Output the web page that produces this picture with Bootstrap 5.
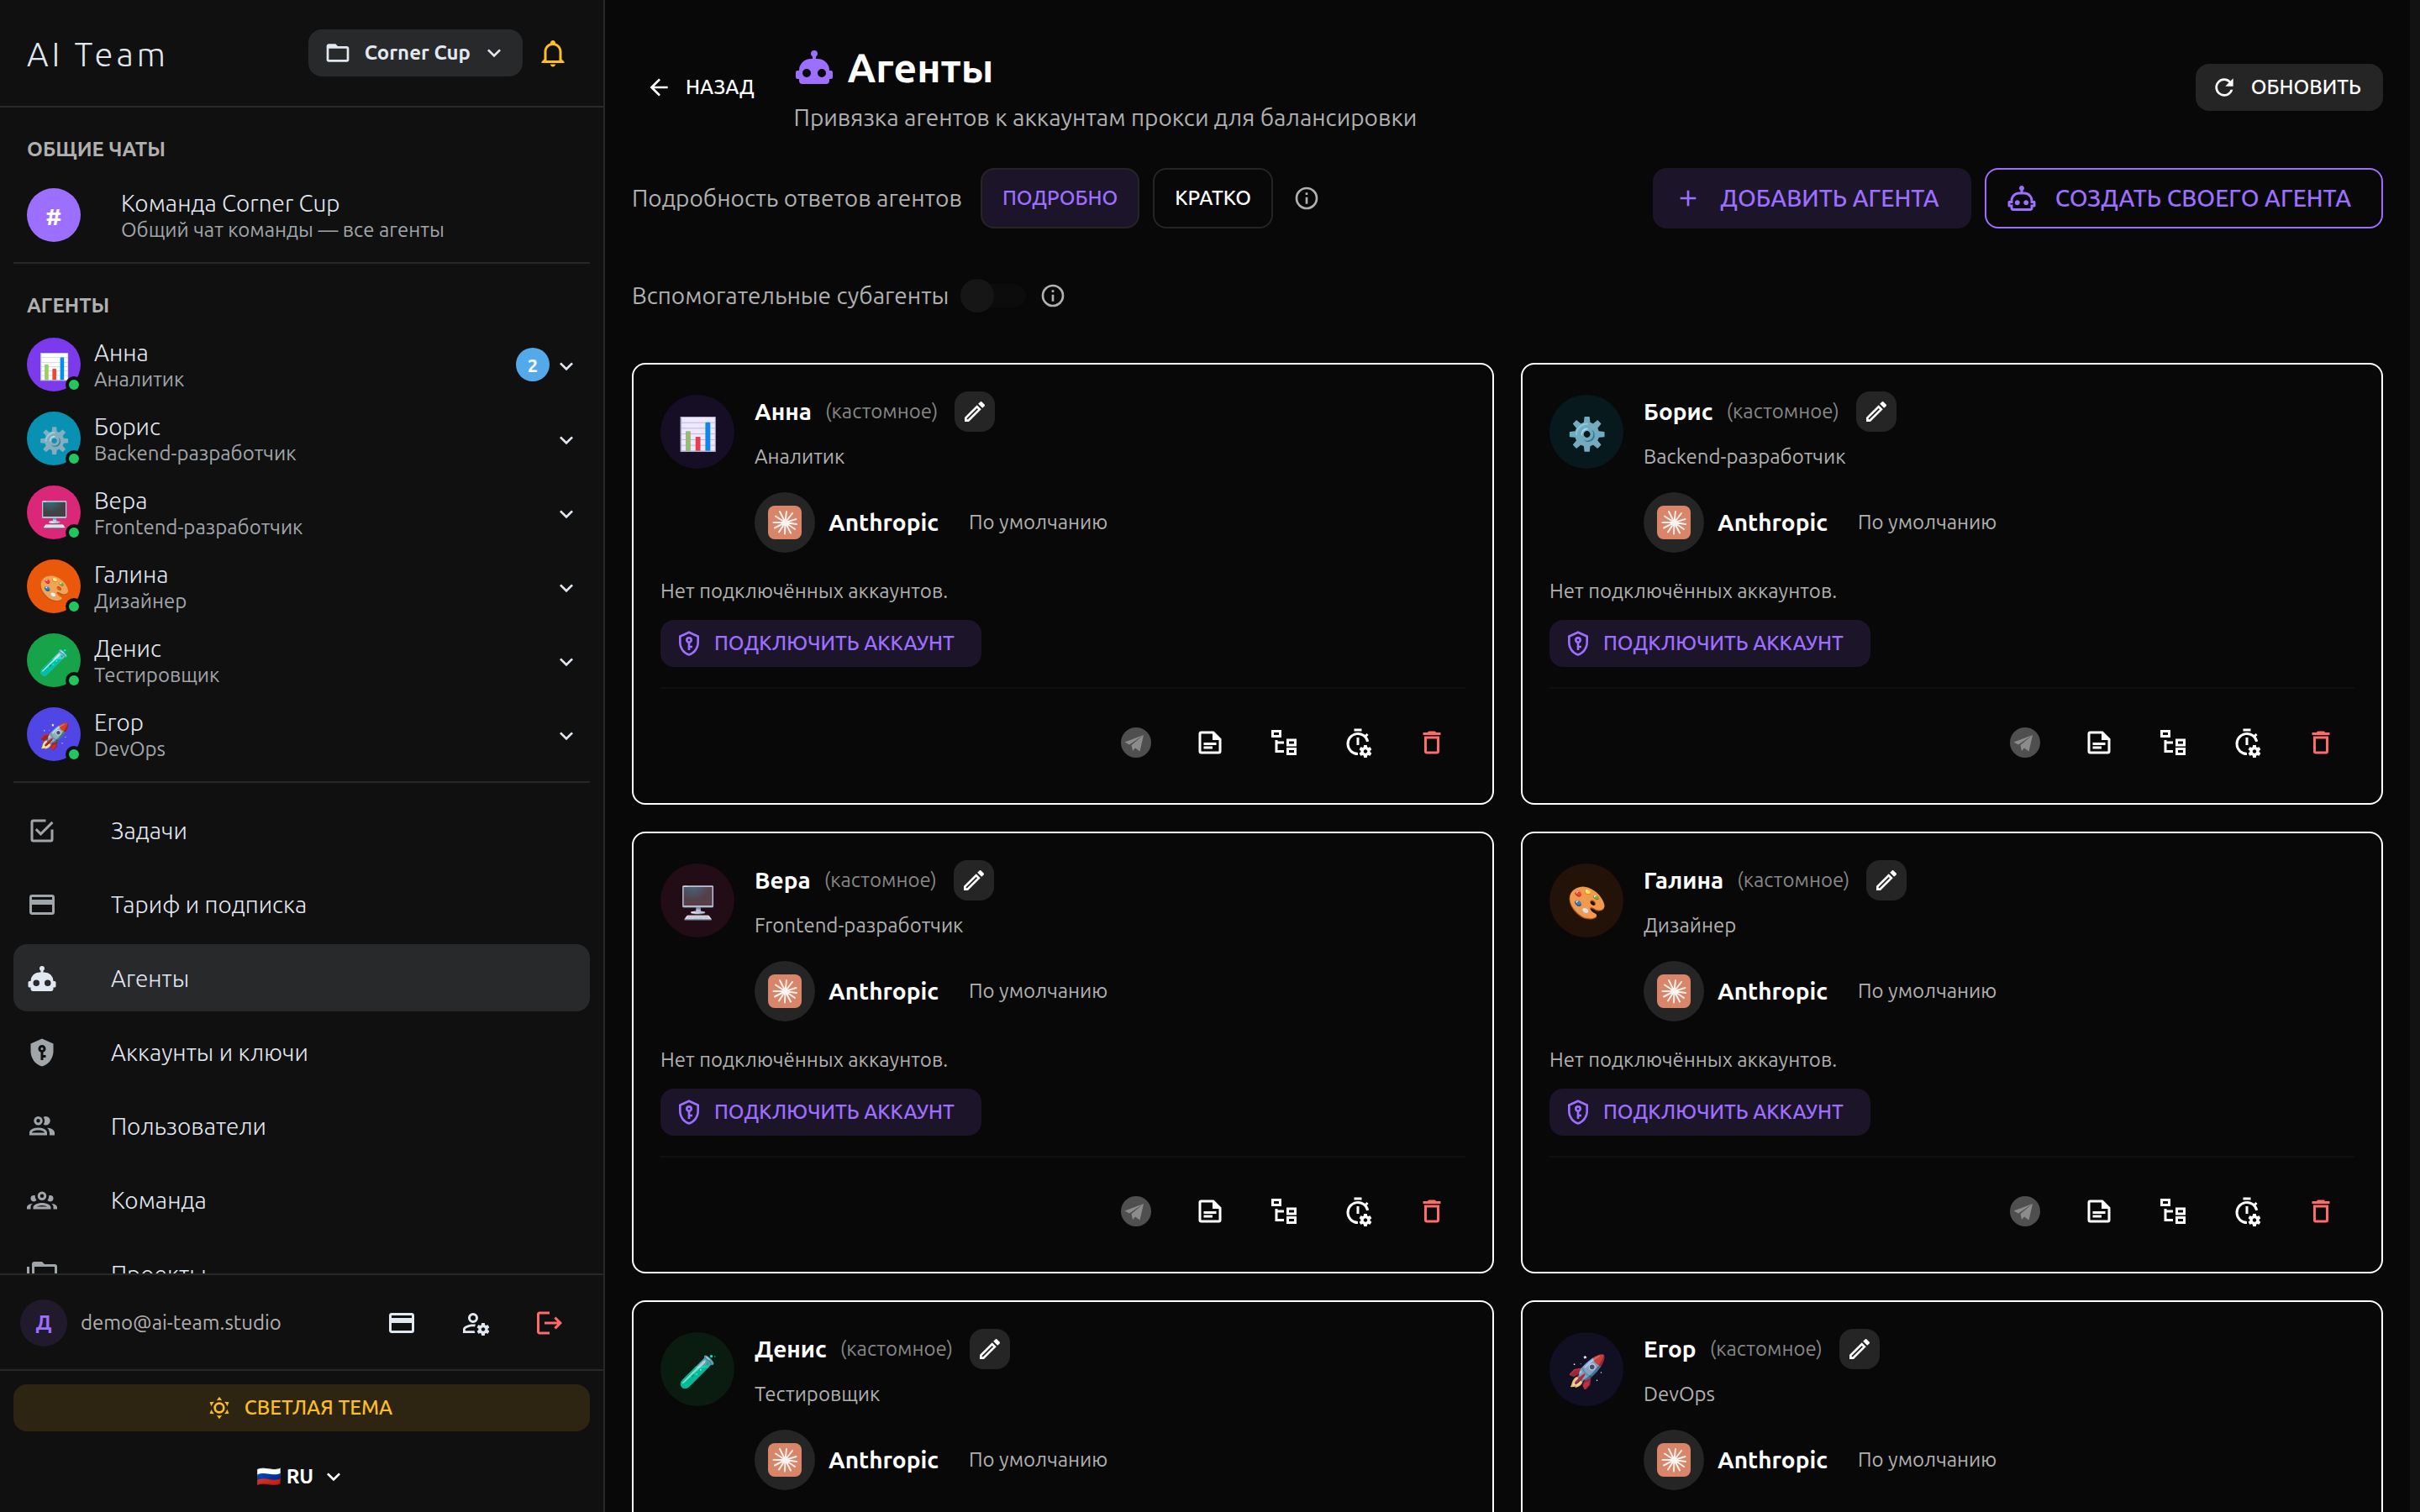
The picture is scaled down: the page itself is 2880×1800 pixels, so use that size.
<!DOCTYPE html>
<html lang="ru" data-bs-theme="dark">
<head>
<meta charset="utf-8">
<meta name="viewport" content="width=device-width, initial-scale=1">
<title>AI Team — Агенты</title>
<link href="https://cdn.jsdelivr.net/npm/bootstrap@5.3.0/dist/css/bootstrap.min.css" rel="stylesheet">
<style>
  :root { --accent: #9d6fff; --muted: #b0b0b0; --line: #272727; --soft: #252525; --text: #e2e8f0; }
  body { background: #080808; color: #fff; font-family: Ubuntu, "Noto Sans", sans-serif; font-size: 24px; line-height: 32px; }
  a { color: inherit; text-decoration: none; }
  .ic { width: 32px; height: 32px; fill: currentColor; flex: none; display: block; }
  .ic-md { width: 36px; height: 36px; }
  .ic-lg { width: 48px; height: 48px; }
  .btn { --bs-btn-font-size: 24px; --bs-btn-line-height: 32px; --bs-btn-font-weight: 500; --bs-btn-border-width: 2px; --bs-btn-border-radius: 16px; --bs-btn-padding-y: 10px; --bs-btn-color: #fff;
    display: inline-flex; align-items: center; white-space: nowrap; font-family: inherit; }
  .fs-name { font-size: 28px; }
  .fw-strong { font-weight: 600; }
  .text-soft { color: var(--muted); }
  .text-accent { color: var(--accent); }
  .btn-soft { --bs-btn-bg: var(--soft); padding-left: 16px; padding-right: 24px; }
  .btn-tall { height: 72px; }
  .btn-accent { --bs-btn-color: var(--accent); --bs-btn-bg: #1c1428; --bs-btn-border-color: transparent; }
  .btn-line { --bs-btn-border-color: var(--soft); padding: 0 24px; }
  .btn-big { --bs-btn-font-size: 28px; padding-left: 24px; padding-right: 36px; gap: 22px; }
  .btn-create { --bs-btn-color: var(--accent); --bs-btn-border-color: var(--accent); }
  .btn-icon { width: 80px; height: 80px; padding: 0; justify-content: center; }

  .side { width: 720px; background: #101010; border-right: 2px solid var(--line); color: var(--text); }
  .side-head { height: 128px; padding: 0 42px 0 32px; border-bottom: 2px solid #2a2a2b; }
  .brand { font-size: 40px; font-weight: 300; letter-spacing: 4px; padding-top: 4px; }
  .btn-team { --bs-btn-bg: #28292b; --bs-btn-color: var(--text); --bs-btn-font-weight: 700; padding-left: 17px; padding-right: 16px; margin-right: 18px; }
  .btn-team .chev-gap { margin-left: 12px; }
  .bell { color: #fbbf24; }
  .side-title { padding: 34px 32px 10px; font-weight: 700; color: var(--muted); }
  .side-rule { height: 2px; background: var(--line); margin: 12px 16px 0; }
  .side-body { min-height: 0; }
  .agent-row { height: 88px; padding: 0 28px 0 32px; font-weight: 300; }
  .agent-text { padding-top: 4px; }
  .agent-sub { color: #a0a5aa; font-weight: 400; }
  .face { width: 64px; height: 64px; border-radius: 50%; font-size: 30px; flex: none; position: relative; display: flex; align-items: center; justify-content: center; padding-top: 4px; }
  .face-hash { background: var(--accent); color: #fff; font-weight: 700; font-size: 28px; }
  .online { position: absolute; right: -2px; bottom: -2px; width: 20px; height: 20px; border-radius: 50%; border: 4px solid #101010; background: #22c55e; }
  .unread { width: 40px; height: 40px; border-radius: 50%; background: #54a9eb; color: #fff; font-weight: 700; font-size: 22px; padding-top: 2px; }
  .side-link { height: 80px; margin: 0 16px 8px; padding: 2px 16px 0; border-radius: 16px; font-size: 28px; font-weight: 300; gap: 64px; }
  .side-link .ic { color: #a0a5aa; }
  .side-link.active { background: #28292b; }
  .side-link.active .ic { color: var(--text); }
  .user-row { height: 114px; padding: 2px 24px 0; border-top: 2px solid var(--line); }
  .user-pic { width: 56px; height: 56px; border-radius: 50%; background: #211a2d; color: var(--accent); font-weight: 700; }
  .user-row .btn { --bs-btn-color: var(--text); }
  .side-foot { height: 170px; padding: 16px 16px 0; border-top: 2px solid var(--line); }
  .btn-theme { --bs-btn-color: #fbbf24; --bs-btn-bg: #2d2412; --bs-btn-border-color: transparent; gap: 14px; padding-right: 18px; }
  .btn-lang { --bs-btn-font-weight: 600; }
  .lang-row { margin-top: 26px; }
  .btn.danger-ic { --bs-btn-color: #ff6b6b; }

  .page { padding: 48px 32px 0; border-right: 12px solid #121212; }
  .page h1 { font-size: 48px; line-height: 64px; font-weight: 700; margin-bottom: 12px; }
  .page-head { height: 112px; }
  .btn-back { padding: 10px 22px; margin-right: 23px; margin-left: -8px; }
  .tool-row { margin-top: 40px; }
  .tool-label { margin-right: 22px; }
  .sub-row { margin: 48px 0; }
  .switch-slot { height: 64px; margin-left: 14px; }
  .switch-slot input { appearance: none; width: 78px; height: 28px; margin: 0 8px 0 0; border-radius: 14px; background: #0c0c0c; position: relative; }
  .switch-slot input::before { content: ""; position: absolute; left: 0; top: -6px; width: 40px; height: 40px; border-radius: 50%; background: #161616; }
  .agent-grid { --bs-gutter-x: 32px; --bs-gutter-y: 32px; }
  .agent-card { border: 2px solid #fff; border-radius: 16px; padding: 32px; min-height: 526px; background: #080808; }
  .tint { width: 88px; height: 88px; border-radius: 50%; font-size: 38px; flex: none; position: relative; overflow: hidden; margin-top: 4px; padding-top: 4px; display: flex; align-items: center; justify-content: center; }
  .tint::after { content: ""; position: absolute; inset: 0; background: var(--c); opacity: .12; }
  .btn-pencil { width: 48px; height: 48px; padding: 0; margin-left: 20px; justify-content: center; }
  .vendor { width: 72px; height: 72px; border-radius: 50%; background: var(--soft); }
  .custom-note { color: #868686; }
  .agent-role { margin-top: 14px; }
  .vendor-row { margin-top: 26px; }
  .vendor-plan { margin-left: 36px; }
  .no-acc { margin: 30px 0 18px; }
  .btn-connect { padding-left: 16px; padding-right: 30px; gap: 14px; }
  .card-rule { height: 2px; background: #101010; }
</style>
</head>
<body class="vh-100 overflow-hidden d-flex">

<svg class="d-none" aria-hidden="true">
  <symbol id="robot" viewBox="0 0 24 24"><path d="M12,2A2,2 0 0,1 14,4C14,4.74 13.6,5.39 13,5.73V7H14A7,7 0 0,1 21,14H22A1,1 0 0,1 23,15V18A1,1 0 0,1 22,19H21V20A2,2 0 0,1 19,22H5A2,2 0 0,1 3,20V19H2A1,1 0 0,1 1,18V15A1,1 0 0,1 2,14H3A7,7 0 0,1 10,7H11V5.73C10.4,5.39 10,4.74 10,4A2,2 0 0,1 12,2M7.5,13A2.5,2.5 0 0,0 5,15.5A2.5,2.5 0 0,0 7.5,18A2.5,2.5 0 0,0 10,15.5A2.5,2.5 0 0,0 7.5,13M16.5,13A2.5,2.5 0 0,0 14,15.5A2.5,2.5 0 0,0 16.5,18A2.5,2.5 0 0,0 19,15.5A2.5,2.5 0 0,0 16.5,13Z"/></symbol>
  <symbol id="robot-o" viewBox="0 0 24 24"><path d="M17.5 15.5C17.5 16.61 16.61 17.5 15.5 17.5S13.5 16.61 13.5 15.5 14.4 13.5 15.5 13.5 17.5 14.4 17.5 15.5M8.5 13.5C7.4 13.5 6.5 14.4 6.5 15.5S7.4 17.5 8.5 17.5 10.5 16.61 10.5 15.5 9.61 13.5 8.5 13.5M23 15V18C23 18.55 22.55 19 22 19H21V20C21 21.11 20.11 22 19 22H5C3.9 22 3 21.11 3 20V19H2C1.45 19 1 18.55 1 18V15C1 14.45 1.45 14 2 14H3C3 10.13 6.13 7 10 7H11V5.73C10.4 5.39 10 4.74 10 4C10 2.9 10.9 2 12 2S14 2.9 14 4C14 4.74 13.6 5.39 13 5.73V7H14C17.87 7 21 10.13 21 14H22C22.55 14 23 14.45 23 15M21 16H19V14C19 11.24 16.76 9 14 9H10C7.24 9 5 11.24 5 14V16H3V17H5V20H19V17H21V16Z"/></symbol>
  <symbol id="check" viewBox="0 0 24 24"><path d="M19,19H5V5H15V3H5C3.89,3 3,3.89 3,5V19A2,2 0 0,0 5,21H19A2,2 0 0,0 21,19V11H19M7.91,10.08L6.5,11.5L11,16L21,6L19.59,4.58L11,13.17L7.91,10.08Z"/></symbol>
  <symbol id="card-o" viewBox="0 0 24 24"><path d="M20,8H4V6H20M20,18H4V12H20M20,4H4C2.89,4 2,4.89 2,6V18C2,19.1 2.9,20 4,20H20A2,2 0 0,0 22,18V6C22,4.89 21.1,4 20,4Z"/></symbol>
  <symbol id="shield" viewBox="0 0 24 24"><path d="M12,8A1,1 0 0,1 13,9A1,1 0 0,1 12,10A1,1 0 0,1 11,9A1,1 0 0,1 12,8M21,11C21,16.55 17.16,21.74 12,23C6.84,21.74 3,16.55 3,11V5L12,1L21,5V11M12,6A3,3 0 0,0 9,9C9,10.31 9.83,11.42 11,11.83V18H13V16H15V14H13V11.83C14.17,11.42 15,10.31 15,9A3,3 0 0,0 12,6Z"/></symbol>
  <symbol id="shield-o" viewBox="0 0 24 24"><path d="M21,11C21,16.55 17.16,21.74 12,23C6.84,21.74 3,16.55 3,11V5L12,1L21,5V11M12,21C15.75,20 19,15.54 19,11.22V6.3L12,3.18L5,6.3V11.22C5,15.54 8.25,20 12,21M12,6A3,3 0 0,1 15,9C15,10.31 14.17,11.42 13,11.83V14H15V16H13V18H11V11.83C9.83,11.42 9,10.31 9,9A3,3 0 0,1 12,6M12,8A1,1 0 0,0 11,9A1,1 0 0,0 12,10A1,1 0 0,0 13,9A1,1 0 0,0 12,8Z"/></symbol>
  <symbol id="users" viewBox="0 0 24 24"><path d="M13.07 10.41A5 5 0 0 0 13.07 4.59A3.39 3.39 0 0 1 15 4A3.5 3.5 0 0 1 15 11A3.39 3.39 0 0 1 13.07 10.41M5.5 7.5A3.5 3.5 0 1 1 9 11A3.5 3.5 0 0 1 5.5 7.5M7.5 7.5A1.5 1.5 0 1 0 9 6A1.5 1.5 0 0 0 7.5 7.5M16 17V19H2V17S2 13 9 13 16 17 16 17M14 17C13.86 16.22 12.67 15 9 15S4.07 16.31 4 17M15.95 13A5.32 5.32 0 0 1 18 17V19H22V17S22 13.37 15.94 13Z"/></symbol>
  <symbol id="group" viewBox="0 0 24 24"><path d="M12,5A3.5,3.5 0 0,0 8.5,8.5A3.5,3.5 0 0,0 12,12A3.5,3.5 0 0,0 15.5,8.5A3.5,3.5 0 0,0 12,5M12,7A1.5,1.5 0 0,1 13.5,8.5A1.5,1.5 0 0,1 12,10A1.5,1.5 0 0,1 10.5,8.5A1.5,1.5 0 0,1 12,7M5.5,8A2.5,2.5 0 0,0 3,10.5C3,11.44 3.53,12.25 4.29,12.68C4.65,12.88 5.06,13 5.5,13C5.94,13 6.35,12.88 6.71,12.68C7.08,12.47 7.39,12.17 7.62,11.81C6.89,10.86 6.5,9.7 6.5,8.5C6.5,8.41 6.5,8.31 6.5,8.22C6.2,8.08 5.86,8 5.5,8M18.5,8C18.14,8 17.8,8.08 17.5,8.22C17.5,8.31 17.5,8.41 17.5,8.5C17.5,9.7 17.11,10.86 16.38,11.81C16.5,12 16.63,12.15 16.78,12.3C16.94,12.45 17.1,12.58 17.29,12.68C17.65,12.88 18.06,13 18.5,13C18.94,13 19.35,12.88 19.71,12.68C20.47,12.25 21,11.44 21,10.5A2.5,2.5 0 0,0 18.5,8M12,14C9.66,14 5,15.17 5,17.5V19H19V17.5C19,15.17 14.34,14 12,14M4.71,14.55C2.78,14.78 0,15.76 0,17.5V19H3V17.07C3,16.06 3.69,15.22 4.71,14.55M19.29,14.55C20.31,15.22 21,16.06 21,17.07V19H24V17.5C24,15.76 21.22,14.78 19.29,14.55M12,16C13.53,16 15.24,16.5 16.23,17H7.77C8.76,16.5 10.47,16 12,16Z"/></symbol>
  <symbol id="folders" viewBox="0 0 24 24"><path d="M22,4H14L12,2H6A2,2 0 0,0 4,4V16A2,2 0 0,0 6,18H22A2,2 0 0,0 24,16V6A2,2 0 0,0 22,4M2,6H0V20A2,2 0 0,0 2,22H20V20H2V6M6,16V6H22V16H6Z"/></symbol>
  <symbol id="folder" viewBox="0 0 24 24"><path d="M20,18H4V8H20M20,6H12L10,4H4C2.89,4 2,4.89 2,6V18A2,2 0 0,0 4,20H20A2,2 0 0,0 22,18V8C22,6.89 21.1,6 20,6Z"/></symbol>
  <symbol id="chev" viewBox="0 0 24 24"><path d="M7.41,8.58L12,13.17L16.59,8.58L18,10L12,16L6,10L7.41,8.58Z"/></symbol>
  <symbol id="bell" viewBox="0 0 24 24"><path d="M10 21H14C14 22.1 13.1 23 12 23S10 22.1 10 21M21 19V20H3V19L5 17V11C5 7.9 7.03 5.17 10 4.29C10 4.19 10 4.1 10 4C10 2.9 10.9 2 12 2S14 2.9 14 4C14 4.1 14 4.19 14 4.29C16.97 5.17 19 7.9 19 11V17L21 19M17 11C17 8.24 14.76 6 12 6S7 8.24 7 11V18H17V11Z"/></symbol>
  <symbol id="back" viewBox="0 0 24 24"><path d="M20,11V13H8L13.5,18.5L12.08,19.92L4.16,12L12.08,4.08L13.5,5.5L8,11H20Z"/></symbol>
  <symbol id="refresh" viewBox="0 0 24 24"><path d="M17.65,6.35C16.2,4.9 14.21,4 12,4A8,8 0 0,0 4,12A8,8 0 0,0 12,20C15.73,20 18.84,17.45 19.73,14H17.65C16.83,16.33 14.61,18 12,18A6,6 0 0,1 6,12A6,6 0 0,1 12,6C13.66,6 15.14,6.69 16.22,7.78L13,11H20V4L17.65,6.35Z"/></symbol>
  <symbol id="plus" viewBox="0 0 24 24"><path d="M19,13H13V19H11V13H5V11H11V5H13V11H19V13Z"/></symbol>
  <symbol id="info" viewBox="0 0 24 24"><path d="M11,9H13V7H11M12,20C7.59,20 4,16.41 4,12C4,7.59 7.59,4 12,4C16.41,4 20,7.59 20,12C20,16.41 16.41,20 12,20M12,2A10,10 0 0,0 2,12A10,10 0 0,0 12,22A10,10 0 0,0 22,12A10,10 0 0,0 12,2M11,17H13V11H11V17Z"/></symbol>
  <symbol id="pencil" viewBox="0 0 24 24"><path d="M14.06,9L15,9.94L5.92,19H5V18.08L14.06,9M17.66,3C17.41,3 17.15,3.1 16.96,3.29L15.13,5.12L18.88,8.87L20.71,7.04C21.1,6.65 21.1,6 20.71,5.63L18.37,3.29C18.17,3.09 17.92,3 17.66,3M14.06,6.19L3,17.25V21H6.75L17.81,9.94L14.06,6.19Z"/></symbol>
  <symbol id="trash" viewBox="0 0 24 24"><path d="M6,19A2,2 0 0,0 8,21H16A2,2 0 0,0 18,19V7H6V19M8,9H16V19H8V9M15.5,4L14.5,3H9.5L8.5,4H5V6H19V4H15.5Z"/></symbol>
  <symbol id="note" viewBox="0 0 24 24"><path fill-rule="evenodd" d="M5 3H15L21 9V19A2 2 0 0 1 19 21H5A2 2 0 0 1 3 19V5A2 2 0 0 1 5 3ZM5 5V19H19V10H14V5ZM7 12H17V14H7ZM7 15H14V17H7Z"/></symbol>
  <symbol id="tree" viewBox="0 0 24 24"><path d="M12 13H7V18H12V20H5V10H7V11H12V13M8 4V6H4V4H8M10 2H2V8H10V2M20 11V13H16V11H20M22 9H14V15H22V9M20 18V20H16V18H20M22 16H14V22H22V16Z"/></symbol>
  <symbol id="gear" viewBox="0 0 24 24"><path d="M17 12C16.84 12 16.76 12.08 16.76 12.24L16.5 13.5C16.28 13.68 15.96 13.84 15.72 14L14.44 13.5C14.36 13.5 14.2 13.5 14.12 13.6L13.16 15.36C13.08 15.44 13.08 15.6 13.24 15.68L14.28 16.5V17.5L13.24 18.32C13.16 18.4 13.08 18.56 13.16 18.64L14.12 20.4C14.2 20.5 14.36 20.5 14.44 20.5L15.72 20C15.96 20.16 16.28 20.32 16.5 20.5L16.76 21.76C16.76 21.92 16.84 22 17 22H19C19.08 22 19.24 21.92 19.24 21.76L19.4 20.5C19.72 20.32 20.04 20.16 20.28 20L21.5 20.5C21.64 20.5 21.8 20.5 21.8 20.4L22.84 18.64C22.92 18.56 22.84 18.4 22.76 18.32L21.72 17.5V16.5L22.76 15.68C22.84 15.6 22.92 15.44 22.84 15.36L21.8 13.6C21.8 13.5 21.64 13.5 21.5 13.5L20.28 14C20.04 13.84 19.72 13.68 19.4 13.5L19.24 12.24C19.24 12.08 19.08 12 19 12H17M18.04 15.5C18.84 15.5 19.54 16.2 19.54 17.04C19.54 17.84 18.84 18.54 18.04 18.54C17.2 18.54 16.5 17.84 16.5 17.04C16.5 16.2 17.2 15.5 18.04 15.5Z"/></symbol>
  <symbol id="user-cog" viewBox="0 0 24 24"><use href="#gear" width="24" height="24"/><path d="M10 4A4 4 0 0 0 6 8A4 4 0 0 0 10 12A4 4 0 0 0 14 8A4 4 0 0 0 10 4M10 6A2 2 0 0 1 12 8A2 2 0 0 1 10 10A2 2 0 0 1 8 8A2 2 0 0 1 10 6M10 13C7.33 13 2 14.33 2 17V20H11.67C11.39 19.41 11.19 18.77 11.09 18.1H3.9V17C3.9 16.36 7.03 14.9 10 14.9C10.43 14.9 10.87 14.94 11.3 15C11.5 14.36 11.77 13.76 12.12 13.21C11.34 13.08 10.6 13 10 13Z"/></symbol>
  <symbol id="timer" viewBox="0 0 24 24"><path d="M9 1H15V3H9ZM11 8H13V14H11Z"/><path d="M19.8 11.2A8 8 0 1 0 12 21M17.2 7.8L19.7 5.3" fill="none" stroke="currentColor" stroke-width="2"/><use href="#gear" x="0" y="2" width="24" height="24"/></symbol>
  <symbol id="logout" viewBox="0 0 24 24"><path d="M17 7L15.59 8.41L18.17 11H8V13H18.17L15.59 15.58L17 17L22 12M4 5H12V3H4C2.9 3 2 3.9 2 5V19C2 20.1 2.9 21 4 21H12V19H4V5Z"/></symbol>
  <symbol id="sun" viewBox="0 0 24 24"><path d="M12,7A5,5 0 0,1 17,12A5,5 0 0,1 12,17A5,5 0 0,1 7,12A5,5 0 0,1 12,7M12,9A3,3 0 0,0 9,12A3,3 0 0,0 12,15A3,3 0 0,0 15,12A3,3 0 0,0 12,9M12,2L14.39,5.42C13.65,5.15 12.84,5 12,5C11.16,5 10.35,5.15 9.61,5.42L12,2M3.34,7L7.5,6.65C6.9,7.16 6.36,7.78 5.94,8.5C5.5,9.24 5.25,10 5.11,10.79L3.34,7M3.36,17L5.12,13.23C5.26,14 5.53,14.78 5.95,15.5C6.37,16.24 6.91,16.86 7.5,17.37L3.36,17M20.65,7L18.88,10.79C18.74,10 18.47,9.23 18.05,8.5C17.63,7.78 17.1,7.15 16.5,6.64L20.65,7M20.64,17L16.5,17.36C17.09,16.85 17.62,16.22 18.04,15.5C18.46,14.77 18.73,14 18.87,13.21L20.64,17M12,22L9.59,18.56C10.33,18.83 11.14,19 12,19C12.82,19 13.63,18.83 14.37,18.56L12,22Z"/></symbol>
  <symbol id="telegram" viewBox="0 0 36 36"><circle cx="18" cy="18" r="18" fill="#4f4f4f"/><path d="M4.500 17.500L27 9L10 20.500Z M27 9L12.500 21L14 28L17 24.500L22.500 28.500Z" fill="#8c8c8c"/></symbol>
  <symbol id="burst" viewBox="0 0 40 40"><rect width="40" height="40" rx="8" fill="#d98569"/><g stroke="#fcf2ee" stroke-width="2" stroke-linecap="round"><path d="M20.500 20L14 7M20.500 20L22 7M20.500 20L29 9M20.500 20L33.500 16M20.500 20L34 22M20.500 20L32 28M20.500 20L27 32.500M20.500 20L20 33.500M20.500 20L13 31.500M20.500 20L8 26.500M20.500 20L6.500 20M20.500 20L9 12.500"/></g></symbol>
</svg>

<aside class="side d-flex flex-column flex-shrink-0 vh-100">
  <header class="side-head d-flex align-items-center flex-shrink-0">
    <a href="#" class="brand me-auto">AI Team</a>
    <button class="btn btn-team" type="button"><svg class="ic me-3"><use href="#folder"/></svg>Corner Cup<svg class="ic chev-gap"><use href="#chev"/></svg></button>
    <button class="btn p-0 border-0 bell" type="button" aria-label="Уведомления"><svg class="ic ic-md"><use href="#bell"/></svg></button>
  </header>

  <div class="side-body flex-fill overflow-hidden">
    <div class="side-title">ОБЩИЕ ЧАТЫ</div>
    <a href="#" class="agent-row d-flex align-items-center mt-2">
      <span class="face face-hash">#</span>
      <span class="agent-text ms-5"><span class="d-block fs-name">Команда Corner Cup</span><span class="d-block agent-sub">Общий чат команды — все агенты</span></span>
    </a>
    <div class="side-rule"></div>
    <div class="side-title">АГЕНТЫ</div>
    <div id="agentList"></div>
    <div class="side-rule"></div>
    <nav class="pt-3">
      <a href="#" class="side-link d-flex align-items-center"><svg class="ic ic-md"><use href="#check"/></svg>Задачи</a>
      <a href="#" class="side-link d-flex align-items-center"><svg class="ic ic-md"><use href="#card-o"/></svg>Тариф и подписка</a>
      <a href="#" class="side-link active d-flex align-items-center" aria-current="page"><svg class="ic ic-md"><use href="#robot"/></svg>Агенты</a>
      <a href="#" class="side-link d-flex align-items-center"><svg class="ic ic-md"><use href="#shield"/></svg>Аккаунты и ключи</a>
      <a href="#" class="side-link d-flex align-items-center"><svg class="ic ic-md"><use href="#users"/></svg>Пользователи</a>
      <a href="#" class="side-link d-flex align-items-center"><svg class="ic ic-md"><use href="#group"/></svg>Команда</a>
      <a href="#" class="side-link d-flex align-items-center"><svg class="ic ic-md"><use href="#folders"/></svg>Проекты</a>
    </nav>
  </div>

  <div class="user-row d-flex align-items-center flex-shrink-0">
    <span class="user-pic d-flex align-items-center justify-content-center me-3">Д</span>
    <span class="text-soft me-auto">demo@ai-team.studio</span>
    <div class="d-flex gap-2">
      <button class="btn btn-icon" type="button" aria-label="Оплата"><svg class="ic ic-md"><use href="#card-o"/></svg></button>
      <button class="btn btn-icon" type="button" aria-label="Профиль"><svg class="ic ic-md"><use href="#user-cog"/></svg></button>
      <button class="btn btn-icon danger-ic" type="button" aria-label="Выйти"><svg class="ic ic-md"><use href="#logout"/></svg></button>
    </div>
  </div>
  <div class="side-foot flex-shrink-0">
    <button class="btn btn-theme w-100 justify-content-center" type="button"><svg class="ic"><use href="#sun"/></svg>СВЕТЛАЯ ТЕМА</button>
    <div class="lang-row d-flex justify-content-center"><button class="btn btn-lang" type="button">🇷🇺 RU<svg class="ic ms-2"><use href="#chev"/></svg></button></div>
  </div>
</aside>

<main class="page flex-fill overflow-hidden">
  <div class="page-head d-flex align-items-center">
    <button class="btn btn-back" type="button"><svg class="ic me-3"><use href="#back"/></svg>НАЗАД</button>
    <div class="align-self-start">
      <h1 class="d-flex align-items-center gap-3"><svg class="ic ic-lg text-accent"><use href="#robot"/></svg>Агенты</h1>
      <div class="fs-name text-soft">Привязка агентов к аккаунтам прокси для балансировки</div>
    </div>
    <button class="btn btn-soft ms-auto" type="button"><svg class="ic me-3"><use href="#refresh"/></svg>ОБНОВИТЬ</button>
  </div>

  <div class="d-flex align-items-center tool-row">
    <span class="tool-label fs-name text-soft">Подробность ответов агентов</span>
    <button class="btn btn-tall btn-accent btn-line" type="button">ПОДРОБНО</button>
    <button class="btn btn-tall btn-line ms-3" type="button">КРАТКО</button>
    <svg class="ic text-soft ms-4"><use href="#info"/></svg>
    <button class="btn btn-tall btn-accent btn-big ms-auto" type="button"><svg class="ic"><use href="#plus"/></svg>ДОБАВИТЬ АГЕНТА</button>
    <button class="btn btn-tall btn-create btn-big ms-3" type="button"><svg class="ic ic-md"><use href="#robot-o"/></svg>СОЗДАТЬ СВОЕГО АГЕНТА</button>
  </div>

  <div class="d-flex align-items-center sub-row">
    <label class="fs-name text-soft" for="subagents">Вспомогательные субагенты</label>
    <span class="switch-slot d-flex align-items-center"><input type="checkbox" role="switch" id="subagents"></span>
    <svg class="ic text-soft ms-2"><use href="#info"/></svg>
  </div>

  <div class="row agent-grid" id="agentCards"></div>
</main>

<script src="https://cdn.jsdelivr.net/npm/bootstrap@5.3.0/dist/js/bootstrap.bundle.min.js"></script>
<script>
  const agents = [
    { name: 'Анна', role: 'Аналитик', icon: '📊', color: '#7c3aed', unread: 2 },
    { name: 'Борис', role: 'Backend-разработчик', icon: '⚙️', color: '#0891b2' },
    { name: 'Вера', role: 'Frontend-разработчик', icon: '🖥️', color: '#db2777' },
    { name: 'Галина', role: 'Дизайнер', icon: '🎨', color: '#ea580c' },
    { name: 'Денис', role: 'Тестировщик', icon: '🧪', color: '#16a34a' },
    { name: 'Егор', role: 'DevOps', icon: '🚀', color: '#4f46e5' }
  ];
  const ic = (id, cls = '') => `<svg class="ic ${cls}"><use href="#${id}"/></svg>`;
  document.getElementById('agentList').innerHTML = agents.map(a => `
    <a href="#" class="agent-row d-flex align-items-center">
      <span class="face" style="background:${a.color}">${a.icon}<span class="online"></span></span>
      <span class="agent-text ms-3 me-auto"><span class="d-block fs-name">${a.name}</span><span class="d-block agent-sub">${a.role}</span></span>
      ${a.unread ? `<span class="unread d-flex align-items-center justify-content-center me-1">${a.unread}</span>` : ''}
      ${ic('chev', 'mt-1')}
    </a>`).join('');
  document.getElementById('agentCards').innerHTML = agents.map(a => `
    <div class="col-6">
      <article class="agent-card d-flex flex-column">
        <div class="d-flex align-items-start">
          <span class="tint" style="--c:${a.color}">${a.icon}</span>
          <div class="ms-4">
            <div class="d-flex align-items-center">
              <span class="fs-name fw-strong">${a.name}</span>
              <span class="custom-note ms-3">(кастомное)</span>
              <button class="btn btn-soft btn-pencil" type="button" aria-label="Переименовать">${ic('pencil')}</button>
            </div>
            <div class="text-soft agent-role">${a.role}</div>
            <div class="d-flex align-items-center vendor-row">
              <span class="vendor d-flex align-items-center justify-content-center"><svg width="40" height="40"><use href="#burst"/></svg></span>
              <span class="fs-name fw-strong ms-3">Anthropic</span>
              <span class="text-soft vendor-plan">По умолчанию</span>
            </div>
          </div>
        </div>
        <div class="text-soft no-acc">Нет подключённых аккаунтов.</div>
        <button class="btn btn-accent btn-connect align-self-start" type="button">${ic('shield-o')}ПОДКЛЮЧИТЬ АККАУНТ</button>
        <div class="card-rule mt-4"></div>
        <div class="d-flex justify-content-end gap-2 mt-4">
          <button class="btn btn-icon" type="button" aria-label="Telegram">${ic('telegram', 'ic-md')}</button>
          <button class="btn btn-icon" type="button" aria-label="Инструкция">${ic('note', 'ic-md')}</button>
          <button class="btn btn-icon" type="button" aria-label="Структура">${ic('tree', 'ic-md')}</button>
          <button class="btn btn-icon" type="button" aria-label="Расписание">${ic('timer', 'ic-md')}</button>
          <button class="btn btn-icon danger-ic" type="button" aria-label="Удалить">${ic('trash', 'ic-md')}</button>
        </div>
      </article>
    </div>`).join('');
</script>
</body>
</html>
